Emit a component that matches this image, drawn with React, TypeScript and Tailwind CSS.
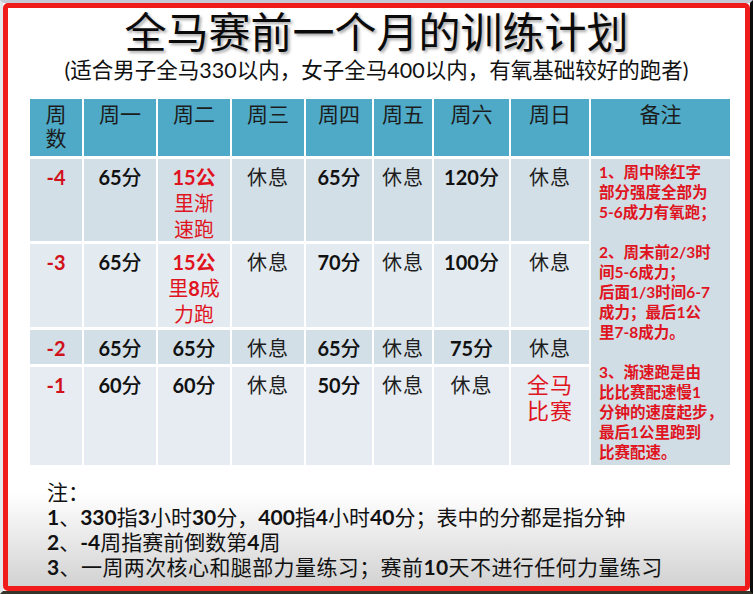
import React from 'react';

const cjk = '"Lato", "Noto Sans CJK SC", sans-serif';

type Cell = React.ReactNode;

const Dur = ({ n }: { n: string }) => (
  <span>
    <span className="font-bold">{n}</span>
    <span className="font-medium">分</span>
  </span>
);

const Rest = () => <span className="tracking-[1px] text-[#1e1e1e]">休息</span>;

const rows: { wk: string; bg: string; cells: Cell[] }[] = [
  {
    wk: '-4',
    bg: 'bg-[#d3dfe7]',
    cells: [
      <Dur n="65" />,
      <span className="text-[#e0141e]">
        <span className="font-bold">15公</span>
        <br />里渐
        <br />速跑
      </span>,
      <Rest />,
      <Dur n="65" />,
      <Rest />,
      <Dur n="120" />,
      <Rest />,
    ],
  },
  {
    wk: '-3',
    bg: 'bg-[#e4ebf0]',
    cells: [
      <Dur n="65" />,
      <span className="text-[#e0141e]">
        <span className="font-bold">15公</span>
        <br />里<span className="font-bold">8</span>成
        <br />力跑
      </span>,
      <Rest />,
      <Dur n="70" />,
      <Rest />,
      <Dur n="100" />,
      <Rest />,
    ],
  },
  {
    wk: '-2',
    bg: 'bg-[#d3dfe7]',
    cells: [<Dur n="65" />, <Dur n="65" />, <Rest />, <Dur n="65" />, <Rest />, <Dur n="75" />, <Rest />],
  },
  {
    wk: '-1',
    bg: 'bg-[#e6ecf1]',
    cells: [
      <Dur n="60" />,
      <Dur n="60" />,
      <Rest />,
      <Dur n="50" />,
      <Rest />,
      <Rest />,
      <span className="text-[#e0141e] text-[22px] leading-[24px] tracking-[1px]">
        全马
        <br />比赛
      </span>,
    ],
  },
];

const heads = ['周一', '周二', '周三', '周四', '周五', '周六', '周日'];

const remarks = [
  '1、周中除红字',
  '部分强度全部为',
  '5-6成力有氧跑；',
  '',
  '2、周末前2/3时',
  '间5-6成力；',
  '后面1/3时间6-7',
  '成力；最后1公',
  '里7-8成力。',
  '',
  '3、渐速跑是由',
  '比比赛配速慢1',
  '分钟的速度起步，',
  '最后1公里跑到',
  '比赛配速。',
];

export default function App() {
  return (
    <div
      className="w-[753px] h-[594px] border-t-[3px] border-t-[#c4cbd6] border-l-[3px] border-l-[#e4e7ec] border-r-[3px] border-r-[#0d0d0d] border-b-[3px] border-b-[#35352b] bg-white"
      style={{ fontFamily: cjk }}
    >
      <div className="h-full w-full border-[5px] border-[#f01c1c] rounded-[5px] bg-linear-to-b from-white from-[84%] to-[#d2d2d2] flex flex-col text-[#111]">
        <h1 className="text-center text-[42px] leading-[48px] font-normal text-[#0a0a0a] [text-shadow:2px_2px_3px_rgba(0,0,0,0.35)]">
          全马赛前一个月的训练计划
        </h1>
        <p className="text-center text-[21.5px] leading-[28px] text-[#111]">
          (适合男子全马330以内，女子全马400以内，有氧基础较好的跑者)
        </p>

        <div className="ml-[22px] mt-[15px] w-[700px]">
          <div className="grid grid-cols-[52px_72px_72px_72px_66px_58px_75px_78px_139px] grid-rows-[57px_82px_83px_34px_98px] gap-x-[2px] gap-y-[3px] text-[20px] leading-[26px] text-center">
            <div className="bg-[#4eaac6] text-[21px] leading-[24px] pt-[3px] text-[#1c1c1c]">
              周
              <br />数
            </div>
            {heads.map((h) => (
              <div key={h} className="bg-[#4eaac6] text-[21px] leading-[24px] pt-[3px] text-[#1c1c1c]">
                {h}
              </div>
            ))}
            <div className="bg-[#4eaac6] text-[21px] leading-[24px] pt-[3px] text-[#1c1c1c]">备注</div>

            <div className="col-start-9 row-start-2 row-span-4 bg-[#d1dde5] pl-[8px] pt-[3px] text-left text-[15.5px] leading-[20px] font-bold text-[#e0141e]">
              {remarks.map((r, i) => (
                <div key={i} className="h-[20px] whitespace-nowrap">
                  {r}
                </div>
              ))}
            </div>

            {rows.map((row) => (
              <React.Fragment key={row.wk}>
                <div className={`${row.bg} pt-[5px] font-bold text-[#d0101a]`}>{row.wk}</div>
                {row.cells.map((c, i) => (
                  <div key={i} className={`${row.bg} pt-[5px]`}>
                    {c}
                  </div>
                ))}
              </React.Fragment>
            ))}
          </div>
        </div>

        <div className="ml-[39px] mt-[14px] text-[21px] leading-[25px] text-[#111]">
          <div>注：</div>
          <div>
            <span className="font-bold">1</span>、<span className="font-bold">330</span>指<span className="font-bold">3</span>小时<span className="font-bold">30</span>分，<span className="font-bold">400</span>指<span className="font-bold">4</span>小时<span className="font-bold">40</span>分；表中的分都是指分钟
          </div>
          <div>
            <span className="font-bold">2</span>、<span className="font-bold">-4</span>周指赛前倒数第<span className="font-bold">4</span>周
          </div>
          <div className="tracking-[0.4px]">
            <span className="font-bold">3</span>、一周两次核心和腿部力量练习；赛前<span className="font-bold">10</span>天不进行任何力量练习
          </div>
        </div>
      </div>
    </div>
  );
}
